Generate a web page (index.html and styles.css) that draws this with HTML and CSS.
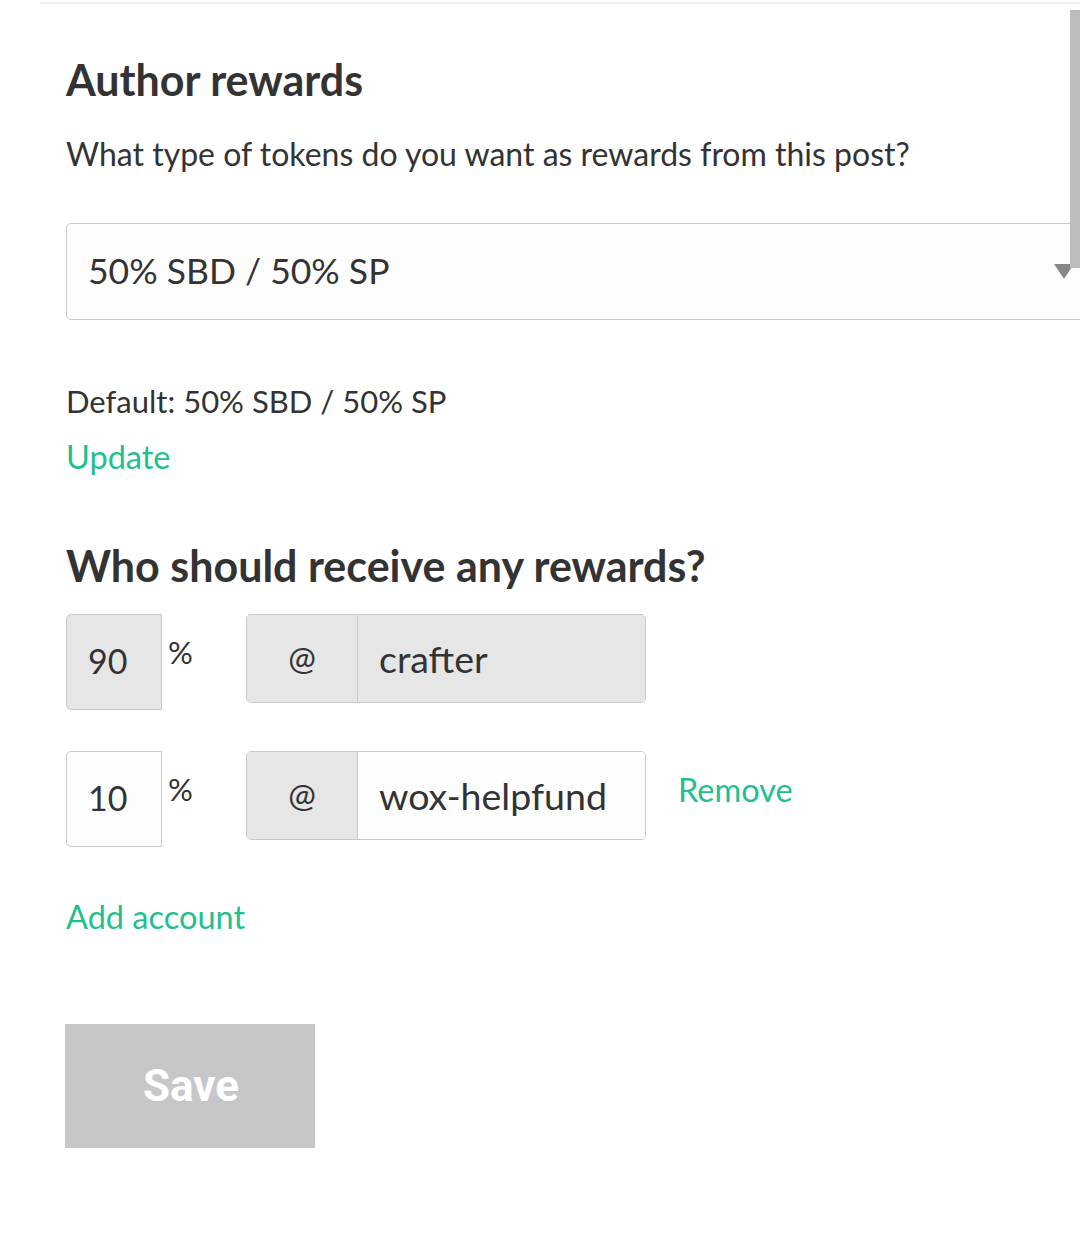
FILE: index.html
```html
<!DOCTYPE html>
<html lang="en">
<head>
<meta charset="utf-8">
<title>Author rewards</title>
<link rel="stylesheet" href="styles.css">
</head>
<body>
<div class="page">
  <div class="rule"></div>
  <div class="scrollbar"></div>
  <div class="content">
    <h2 class="title">Author rewards</h2>
    <p class="question">What type of tokens do you want as rewards from this post?</p>
    <div class="select">
      <span class="select-value">50% SBD / 50% SP</span>
      <span class="select-arrow"></span>
    </div>
    <p class="default">Default: 50% SBD / 50% SP</p>
    <a class="link update">Update</a>
    <h2 class="title who">Who should receive any rewards?</h2>

    <div class="bene-row">
      <div class="pct">
        <div class="pct-input disabled">90</div>
        <span class="pct-sign">%</span>
      </div>
      <div class="acct">
        <div class="acct-addon">@</div>
        <div class="acct-input disabled">crafter</div>
      </div>
    </div>

    <div class="bene-row second">
      <div class="pct">
        <div class="pct-input">10</div>
        <span class="pct-sign">%</span>
      </div>
      <div class="acct">
        <div class="acct-addon">@</div>
        <div class="acct-input">wox-helpfund</div>
      </div>
      <a class="link remove">Remove</a>
    </div>

    <a class="link add">Add account</a>

    <button class="save" type="button">Save</button>
  </div>
</div>
</body>
</html>
```

FILE: styles.css
```css
html, body {
  margin: 0;
  padding: 0;
  background: #ffffff;
  overflow: hidden;
}

body {
  font-family: "Lato", "Liberation Sans", sans-serif;
  color: #333333;
  line-height: 1.2;
}

.page {
  position: relative;
  width: 1080px;
  height: 1257px;
  padding-top: 2px;
  box-sizing: border-box;
  overflow: hidden;
}

.rule {
  height: 2px;
  margin-left: 40px;
  background: #eeeeee;
}

.scrollbar {
  position: absolute;
  right: 0;
  top: 10px;
  width: 10px;
  height: 258px;
  background: #bdbdbd;
  z-index: 2;
}

.content {
  padding-left: 66px;
  display: flex;
  flex-direction: column;
  align-items: flex-start;
}

.title {
  margin: 0;
  font-size: 43px;
  font-weight: 700;
  line-height: 1.2;
  color: #333333;
}

.content > .title:first-child {
  margin-top: 50px;
}

.question {
  margin: 29px 0 0;
  font-size: 32px;
}

.select {
  margin-top: 50px;
  width: 1040px;
  height: 97px;
  box-sizing: border-box;
  border: 1px solid #cacaca;
  border-radius: 5px;
  background: #fdfdfd;
  display: flex;
  align-items: center;
  justify-content: space-between;
  padding: 0 31px 0 21px;
}

.select-value {
  font-size: 35.5px;
}

.select-arrow {
  width: 0;
  height: 0;
  border-left: 10px solid transparent;
  border-right: 10px solid transparent;
  border-top: 15px solid #888888;
}

.default {
  margin: 63px 0 0;
  font-size: 31px;
}

.link {
  color: #1fbf8f;
  font-size: 32.5px;
  text-decoration: none;
}

.update {
  margin-top: 17px;
}

.who {
  margin-top: 64px;
}

.bene-row {
  display: flex;
  align-items: flex-start;
  margin-top: 22px;
}

.bene-row.second {
  margin-top: 41px;
}

.pct {
  width: 180px;
  display: flex;
  align-items: flex-start;
}

.pct-input {
  width: 96px;
  height: 96px;
  box-sizing: border-box;
  border: 1px solid #cacaca;
  border-radius: 5px 0 0 5px;
  background: #fdfdfd;
  display: flex;
  align-items: center;
  padding-left: 21px;
  font-size: 34px;
}

.disabled {
  background: #e6e6e6;
}

.pct-sign {
  margin-left: 6px;
  margin-top: 20px;
  font-size: 31px;
}

.acct {
  width: 400px;
  height: 89px;
  box-sizing: border-box;
  border: 1px solid #cacaca;
  border-radius: 5px;
  overflow: hidden;
  display: flex;
}

.acct-addon {
  width: 110px;
  flex: none;
  background: #e6e6e6;
  border-right: 1px solid #cacaca;
  display: flex;
  align-items: center;
  justify-content: center;
  font-size: 33px;
}

.acct-input {
  flex: 1;
  display: flex;
  align-items: center;
  padding-left: 21px;
  font-size: 37.5px;
  background: #fdfdfd;
}

.acct-input.disabled {
  background: #e6e6e6;
}

.remove {
  margin-left: 32px;
  margin-top: 19px;
}

.add {
  margin-top: 50px;
}

.save {
  margin-top: 88px;
  margin-left: -1px;
  width: 250px;
  height: 124px;
  border: none;
  border-radius: 0;
  background: #c6c7c9;
  color: #ffffff;
  font-family: "Roboto", "Liberation Sans", sans-serif;
  font-weight: 700;
  font-size: 44px;
  padding: 0 0 0 2px;
}
```
